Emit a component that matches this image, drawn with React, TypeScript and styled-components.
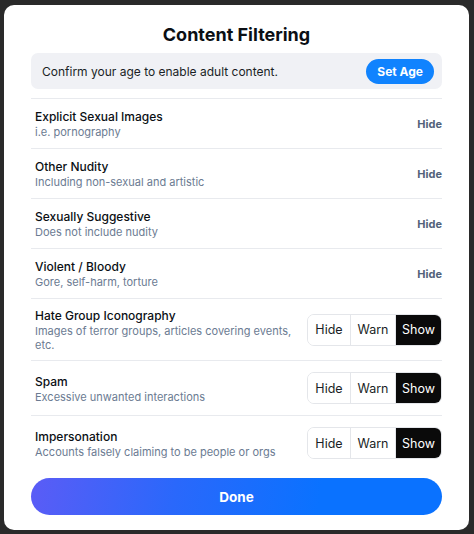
import React, { useState } from "react";
import styled, { createGlobalStyle } from "styled-components";

const GlobalStyle = createGlobalStyle`
    html, body {
        margin: 0;
        padding: 0;
        background: #2a2a2a;
        font-family: Inter, "Noto Sans", "Liberation Sans", sans-serif;
        -webkit-font-smoothing: antialiased;
    }
`;

const Modal = styled.div`
    box-sizing: border-box;
    width: 465px;
    height: 525px;
    margin: 5px 0 0 4px;
    background: #ffffff;
    border-radius: 10px;
    padding: 18px 27px 0 27px;
    display: flex;
    flex-direction: column;
`;

const Title = styled.h1`
    margin: 0 0 6px;
    text-align: center;
    font-size: 18px;
    line-height: 24px;
    font-weight: 700;
    color: #0b0f14;
`;

const AgeBox = styled.div`
    display: flex;
    align-items: center;
    justify-content: space-between;
    height: 36px;
    padding: 0 8px 0 11px;
    background: #f0f1f5;
    border-radius: 7px;
    font-size: 12px;
    color: #1a1f26;
`;

const SetAgeButton = styled.button`
    border: none;
    background: #1083fe;
    color: #ffffff;
    font-family: inherit;
    font-weight: 700;
    font-size: 12px;
    height: 25px;
    padding: 0 11px;
    border-radius: 999px;
`;

const List = styled.div`
    margin-top: 9px;
    display: flex;
    flex-direction: column;
`;

const Row = styled.div<{ $pad: number }>`
    display: flex;
    align-items: center;
    justify-content: space-between;
    gap: 12px;
    border-top: 1px solid #e8eaee;
    padding: ${(p) => p.$pad}px 0 ${(p) => p.$pad}px 4px;
`;

const Text = styled.div`
    display: flex;
    flex-direction: column;
    min-width: 0;
`;

const RowTitle = styled.div`
    font-size: 12px;
    line-height: 17px;
    font-weight: 500;
    color: #0b0f14;
`;

const RowSub = styled.div`
    font-size: 11px;
    line-height: 14px;
    color: #6b7b92;
`;

const FixedLabel = styled.div`
    font-size: 11px;
    font-weight: 700;
    color: #52627a;
`;

const Segmented = styled.div`
    display: flex;
    flex-shrink: 0;
    border: 1px solid #e4e6ea;
    border-radius: 7px;
    overflow: hidden;
`;

const Segment = styled.button<{ $active: boolean; $w: number }>`
    border: none;
    border-left: 1px solid #e4e6ea;
    &:first-child {
        border-left: none;
    }
    width: ${(p) => p.$w}px;
    height: 30px;
    font-family: inherit;
    font-size: 12.5px;
    background: ${(p) => (p.$active ? "#0a0a0a" : "#ffffff")};
    color: ${(p) => (p.$active ? "#ffffff" : "#1a1f26")};
    padding: 0;
`;

const DoneButton = styled.button`
    margin-top: 8px;
    height: 37px;
    border: none;
    border-radius: 999px;
    background: linear-gradient(100deg, #5b5cf6 0%, #2a68fb 35%, #0a72ff 70%);
    color: #ffffff;
    font-family: inherit;
    font-size: 13.5px;
    font-weight: 700;
`;

type Pref = "hide" | "warn" | "show";

const fixed = [
    { title: "Explicit Sexual Images", sub: "i.e. pornography" },
    { title: "Other Nudity", sub: "Including non-sexual and artistic" },
    { title: "Sexually Suggestive", sub: "Does not include nudity" },
    { title: "Violent / Bloody", sub: "Gore, self-harm, torture" },
];

const choices = [
    { title: "Hate Group Iconography", sub: "Images of terror groups, articles covering events, etc.", pad: 8 },
    { title: "Spam", sub: "Excessive unwanted interactions", pad: 11 },
    { title: "Impersonation", sub: "Accounts falsely claiming to be people or orgs", pad: 11 },
];

const SegmentControl = ({ value, onChange }: { value: Pref; onChange: (v: Pref) => void }) => (
    <Segmented>
        <Segment $w={42} $active={value === "hide"} onClick={() => onChange("hide")}>Hide</Segment>
        <Segment $w={45} $active={value === "warn"} onClick={() => onChange("warn")}>Warn</Segment>
        <Segment $w={46} $active={value === "show"} onClick={() => onChange("show")}>Show</Segment>
    </Segmented>
);

const App = () => {
    const [prefs, setPrefs] = useState<Pref[]>(["show", "show", "show"]);

    return (
        <>
            <GlobalStyle />
            <Modal>
                <Title>Content Filtering</Title>
                <AgeBox>
                    <span>Confirm your age to enable adult content.</span>
                    <SetAgeButton>Set Age</SetAgeButton>
                </AgeBox>
                <List>
                    {fixed.map((f) => (
                        <Row key={f.title} $pad={9}>
                            <Text>
                                <RowTitle>{f.title}</RowTitle>
                                <RowSub>{f.sub}</RowSub>
                            </Text>
                            <FixedLabel>Hide</FixedLabel>
                        </Row>
                    ))}
                    {choices.map((c, i) => (
                        <Row key={c.title} $pad={c.pad}>
                            <Text>
                                <RowTitle>{c.title}</RowTitle>
                                <RowSub>{c.sub}</RowSub>
                            </Text>
                            <SegmentControl
                                value={prefs[i]}
                                onChange={(v) => setPrefs(prefs.map((p, j) => (j === i ? v : p)))}
                            />
                        </Row>
                    ))}
                </List>
                <DoneButton>Done</DoneButton>
            </Modal>
        </>
    );
};

export default App;
